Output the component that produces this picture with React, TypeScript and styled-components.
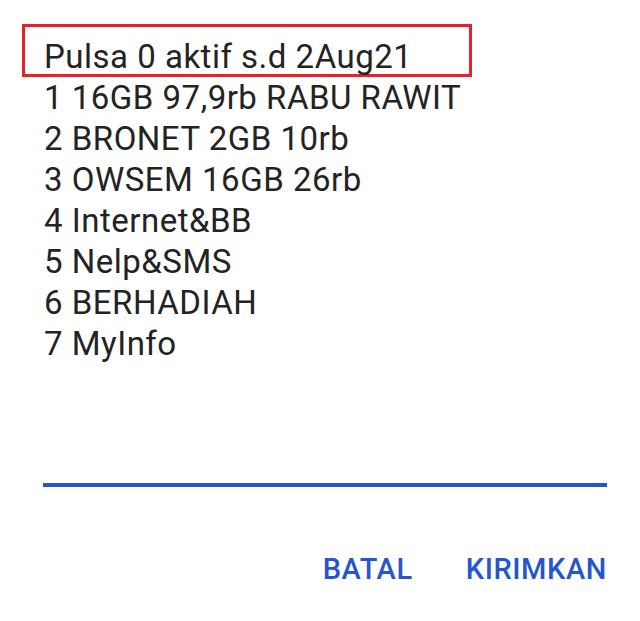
import React from "react";
import styled, { createGlobalStyle } from "styled-components";

const GlobalStyle = createGlobalStyle`
  html, body {
    margin: 0;
    padding: 0;
    background: #ffffff;
  }
  body {
    font-family: Roboto, "Noto Sans", "Liberation Sans", sans-serif;
  }
`;

const Dialog = styled.div`
  width: 640px;
  height: 621px;
  box-sizing: border-box;
  padding: 24px 33px 0 22px;
  display: flex;
  flex-direction: column;
  background: #ffffff;
`;

const Message = styled.div`
  display: flex;
  flex-direction: column;
`;

const Line = styled.div<{ $marked?: boolean }>`
  font-size: 33px;
  line-height: 41px;
  letter-spacing: 0.5px;
  color: #232323;
  white-space: nowrap;
  box-sizing: border-box;
  padding-left: ${(p) => (p.$marked ? "19px" : "22px")};
  ${(p) =>
    p.$marked &&
    `
    width: 450px;
    height: 53px;
    padding-top: 9px;
    border: 3px solid #e8202a;
  `}
`;

const Input = styled.div`
  margin: 0 0 0 21px;
  height: 119px;
  border-bottom: 4px solid #2756cc;
`;

const Actions = styled.div`
  display: flex;
  justify-content: flex-end;
  gap: 53px;
  margin-top: 62px;
`;

const Button = styled.button`
  border: none;
  background: none;
  padding: 0;
  font-family: Roboto, "Noto Sans", "Liberation Sans", sans-serif;
  font-weight: 500;
  font-size: 29px;
  line-height: 40px;
  letter-spacing: 0.6px;
  color: #2756cc;
  cursor: pointer;
`;

const lines = [
  "1 16GB 97,9rb RABU RAWIT",
  "2 BRONET 2GB 10rb",
  "3 OWSEM 16GB 26rb",
  "4 Internet&BB",
  "5 Nelp&SMS",
  "6 BERHADIAH",
  "7 MyInfo",
];

export default function App() {
  return (
    <>
      <GlobalStyle />
      <Dialog>
        <Message>
          <Line $marked>Pulsa 0 aktif s.d 2Aug21</Line>
          {lines.map((l) => (
            <Line key={l}>{l}</Line>
          ))}
        </Message>
        <Input />
        <Actions>
          <Button>BATAL</Button>
          <Button>KIRIMKAN</Button>
        </Actions>
      </Dialog>
    </>
  );
}
